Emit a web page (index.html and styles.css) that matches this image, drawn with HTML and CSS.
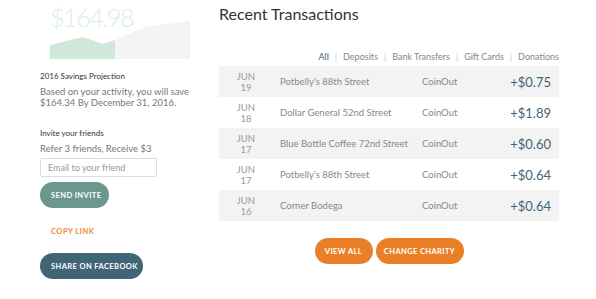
FILE: index.html
```html
<!DOCTYPE html>
<html lang="en">
<head>
    <meta charset="UTF-8">
    <title>Savings</title>
    <link rel="stylesheet" href="styles.css">
</head>
<body>
    <div class="page">
        <aside class="sidebar">
            <div class="savings">
                <div class="savings-amount">$164.98</div>
                <svg class="savings-chart" width="142" height="40" viewBox="0 0 142 40">
                    <polygon points="65,21 95,8 140,2 140,40 65,40" fill="#f4f4f4"/>
                    <polygon points="0,26 33,18 53,25 65,21 65,40 0,40" fill="#cfe8da"/>
                </svg>
            </div>
            <h4 class="label">2016 Savings Projection</h4>
            <p class="text">Based on your activity, you will save $164.34 By December 31, 2016.</p>

            <h4 class="label invite-label">Invite your friends</h4>
            <p class="text">Refer 3 friends, Receive $3</p>
            <form class="invite">
                <input type="email" placeholder="Email to your friend">
                <button type="button" class="btn btn-teal">SEND INVITE</button>
            </form>
            <a href="#" class="copy-link">COPY LINK</a>
            <button type="button" class="btn btn-dark">SHARE ON FACEBOOK</button>
        </aside>

        <main class="transactions">
            <h2>Recent Transactions</h2>
            <nav class="filters">
                <a href="#" class="active">All</a><span>|</span>
                <a href="#">Deposits</a><span>|</span>
                <a href="#">Bank Transfers</a><span>|</span>
                <a href="#">Gift Cards</a><span>|</span>
                <a href="#">Donations</a>
            </nav>
            <div class="tx-list">
                <div class="tx-row">
                    <div class="tx-date">JUN<br>19</div>
                    <div class="tx-name">Potbelly's 88th Street</div>
                    <div class="tx-source">CoinOut</div>
                    <div class="tx-amount">+$0.75</div>
                </div>
                <div class="tx-row">
                    <div class="tx-date">JUN<br>18</div>
                    <div class="tx-name">Dollar General 52nd Street</div>
                    <div class="tx-source">CoinOut</div>
                    <div class="tx-amount">+$1.89</div>
                </div>
                <div class="tx-row">
                    <div class="tx-date">JUN<br>17</div>
                    <div class="tx-name">Blue Bottle Coffee 72nd Street</div>
                    <div class="tx-source">CoinOut</div>
                    <div class="tx-amount">+$0.60</div>
                </div>
                <div class="tx-row">
                    <div class="tx-date">JUN<br>17</div>
                    <div class="tx-name">Potbelly's 88th Street</div>
                    <div class="tx-source">CoinOut</div>
                    <div class="tx-amount">+$0.64</div>
                </div>
                <div class="tx-row">
                    <div class="tx-date">JUN<br>16</div>
                    <div class="tx-name">Corner Bodega</div>
                    <div class="tx-source">CoinOut</div>
                    <div class="tx-amount">+$0.64</div>
                </div>
            </div>
            <div class="actions">
                <button type="button" class="btn btn-orange btn-view">VIEW ALL</button>
                <button type="button" class="btn btn-orange btn-charity">CHANGE CHARITY</button>
            </div>
        </main>
    </div>
</body>
</html>
```

FILE: styles.css
```css
body {
    font-family: Lato, "Open Sans", sans-serif;
    margin: 0;
    padding: 0;
    background-color: #fff;
    color: #555;
}

.page {
    display: flex;
    padding-left: 40px;
}

.sidebar {
    width: 152px;
    display: flex;
    flex-direction: column;
    align-items: flex-start;
}

.savings {
    width: 152px;
    padding-left: 10px;
    box-sizing: border-box;
}

.savings-amount {
    font-size: 25px;
    font-weight: 300;
    letter-spacing: -1.4px;
    color: #d9eee3;
    line-height: 30px;
    margin-top: 2px;
}

.savings-chart {
    display: block;
    margin-top: -13px;
}

.label {
    font-size: 8px;
    font-weight: 400;
    color: #333;
    margin: 12px 0 0;
}

.text {
    font-size: 9.5px;
    line-height: 11px;
    color: #777;
    margin: 5px 0 0;
}

.invite-label {
    margin-top: 20px;
}

.invite {
    display: flex;
    flex-direction: column;
    align-items: flex-start;
    margin-top: 4px;
}

.invite input {
    width: 117px;
    height: 19px;
    box-sizing: border-box;
    border: 1px solid #ddd;
    border-radius: 2px;
    padding: 0 7px;
    font-family: inherit;
    font-size: 9px;
    color: #777;
}

.invite input::placeholder {
    color: #999;
}

.btn {
    border: none;
    border-radius: 13px;
    height: 26px;
    padding: 0 11px;
    color: #fff;
    font-family: inherit;
    font-size: 7.5px;
    font-weight: 700;
    letter-spacing: 0.4px;
    white-space: nowrap;
    cursor: pointer;
}

.btn-teal {
    background-color: #6a988f;
    margin-top: 5px;
    width: 69px;
}

.btn-dark {
    background-color: #3f6577;
    width: 103px;
    margin-top: 17px;
}

.btn-orange {
    background-color: #ea7f27;
}

.copy-link {
    font-size: 7.5px;
    font-weight: 700;
    letter-spacing: 0.5px;
    color: #ef8a37;
    text-decoration: none;
    margin: 19px 0 0 11px;
}

.transactions {
    margin-left: 27px;
    width: 340px;
}

.transactions h2 {
    font-size: 16px;
    font-weight: 400;
    color: #333;
    margin: 4px 0 0;
    line-height: 20px;
}

.filters {
    display: flex;
    justify-content: flex-end;
    align-items: center;
    gap: 6px;
    font-size: 9px;
    margin-top: 25px;
    height: 15px;
}

.filters a {
    color: #888;
    text-decoration: none;
}

.filters a.active {
    color: #3f6577;
}

.filters span {
    color: #ccc;
}

.tx-list {
    margin-top: 2px;
}

.tx-row {
    display: flex;
    align-items: center;
    height: 31px;
    font-size: 9.5px;
    color: #888;
}

.tx-row:nth-child(odd) {
    background-color: #f3f3f3;
}

.tx-date {
    width: 54px;
    text-align: center;
    line-height: 11px;
    color: #999;
}

.tx-name {
    width: 142px;
    margin-left: 7px;
}

.tx-source {
    flex: 1;
}

.tx-amount {
    font-size: 13px;
    color: #3f6577;
    padding-right: 8px;
}

.actions {
    display: flex;
    justify-content: center;
    gap: 3px;
    margin-top: 17px;
}

.btn-view {
    width: 58px;
    padding: 0;
}

.btn-charity {
    width: 88px;
    padding: 0;
}
```
